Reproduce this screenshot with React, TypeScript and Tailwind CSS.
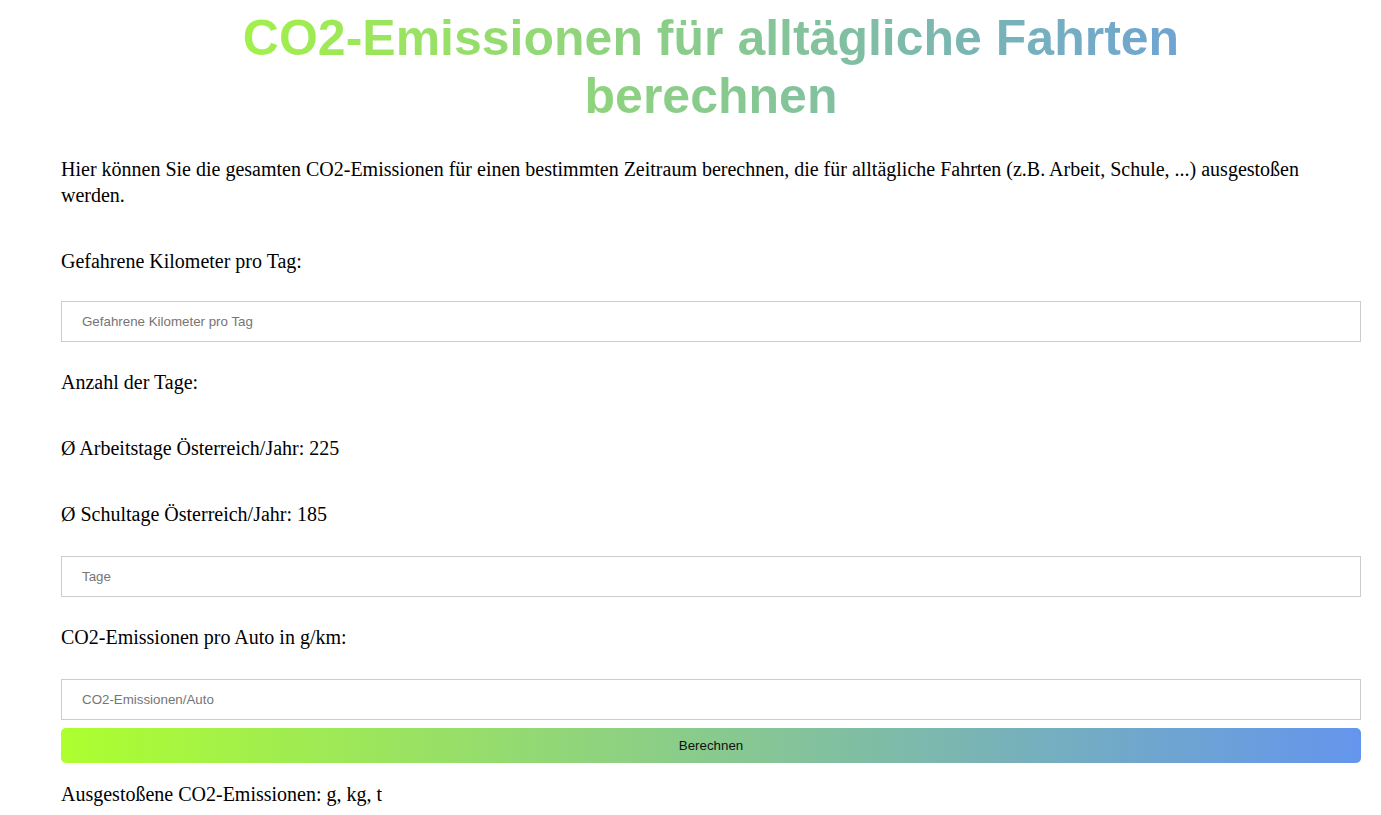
import { useState } from 'react';

const serif = "font-['Liberation_Serif','Times_New_Roman',serif] text-[20px] leading-[26px] text-black";
const inputCls =
  "block w-full h-[41px] border border-[#cccccc] bg-white pl-5 pr-2 font-['Liberation_Sans',Arial,sans-serif] text-[13.333px] text-black placeholder:text-[#757575] outline-none";

export default function App() {
  const [km, setKm] = useState('');
  const [days, setDays] = useState('');
  const [gPerKm, setGPerKm] = useState('');
  const [result, setResult] = useState<{ g: string; kg: string; t: string }>({ g: '', kg: '', t: '' });

  const calculate = () => {
    const total = Number(km) * Number(days) * Number(gPerKm);
    if (!km || !days || !gPerKm || isNaN(total)) {
      setResult({ g: '', kg: '', t: '' });
      return;
    }
    setResult({
      g: total.toString(),
      kg: (total / 1000).toString(),
      t: (total / 1000000).toString()
    });
  };

  return (
    <div className="min-h-screen bg-white pl-[61px] pr-[20px] pt-[9px]">
      <h1 className="bg-[linear-gradient(to_right,#adff2f,#6495ed)] bg-clip-text px-[150px] text-center font-['Liberation_Sans',Arial,sans-serif] text-[50px] font-bold leading-[58px] text-transparent">
        CO2-Emissionen für alltägliche Fahrten berechnen
      </h1>

      <p className={`${serif} mt-[31px]`}>
        Hier können Sie die gesamten CO2-Emissionen für einen bestimmten Zeitraum berechnen, die für alltägliche Fahrten
        (z.B. Arbeit, Schule, ...) ausgestoßen werden.
      </p>

      <p className={`${serif} mt-[40px]`}>Gefahrene Kilometer pro Tag:</p>
      <input
        type="number"
        className={`${inputCls} mt-[27px]`}
        placeholder="Gefahrene Kilometer pro Tag"
        value={km}
        onChange={e => setKm(e.target.value)}
      />

      <p className={`${serif} mt-[27px]`}>Anzahl der Tage:</p>
      <p className={`${serif} mt-[40px]`}>Ø Arbeitstage Österreich/Jahr: 225</p>
      <p className={`${serif} mt-[40px]`}>Ø Schultage Österreich/Jahr: 185</p>
      <input
        type="number"
        className={`${inputCls} mt-[29px]`}
        placeholder="Tage"
        value={days}
        onChange={e => setDays(e.target.value)}
      />

      <p className={`${serif} mt-[27px]`}>CO2-Emissionen pro Auto in g/km:</p>
      <input
        type="number"
        className={`${inputCls} mt-[29px]`}
        placeholder="CO2-Emissionen/Auto"
        value={gPerKm}
        onChange={e => setGPerKm(e.target.value)}
      />

      <button
        type="button"
        onClick={calculate}
        className="mt-[8px] block h-[35px] w-full rounded-[5px] bg-[linear-gradient(to_right,#adff2f,#6495ed)] font-['Liberation_Sans',Arial,sans-serif] text-[13.333px] text-[#111]"
      >
        Berechnen
      </button>

      <p className={`${serif} mt-[18px]`}>
        Ausgestoßene CO2-Emissionen: {result.g}g, {result.kg}kg, {result.t}t
      </p>
    </div>
  );
}
